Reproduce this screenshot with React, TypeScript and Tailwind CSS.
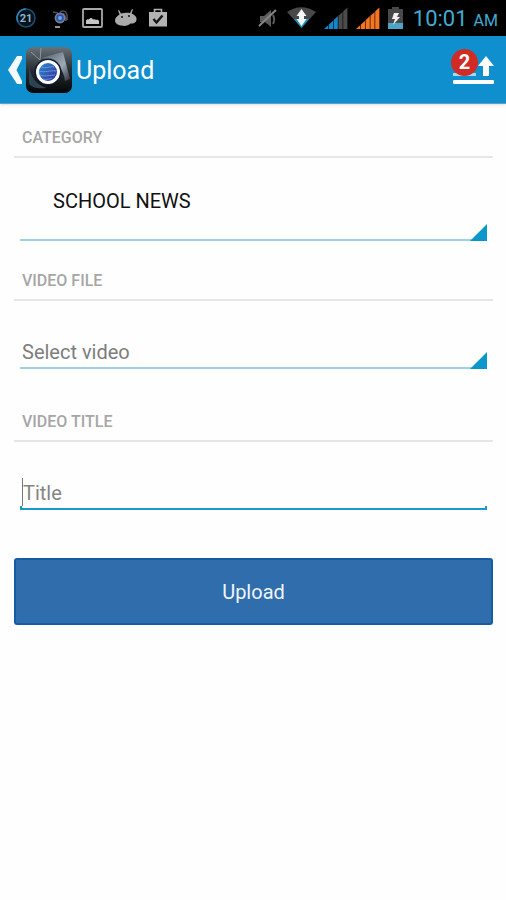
import { useState } from "react";
import type { ReactNode } from "react";

function SignalIcon({ active, inactive, level }: { active: string; inactive: string; level: number }) {
  const bars = [0, 1, 2, 3, 4];
  return (
    <svg width="24" height="22" viewBox="0 0 24 22" aria-hidden="true">
      {bars.map((i) => {
        const x = i * 4.8;
        const right = x + 4.2;
        return (
          <path
            key={i}
            d={`M${x} 22V${22 - x * 0.92}L${right} ${22 - right * 0.92}V22z`}
            fill={i < level ? active : inactive}
          />
        );
      })}
    </svg>
  );
}

function StatusBar() {
  return (
    <div className="flex items-center justify-between h-9 pl-4 pr-2 bg-black">
      {/* Notifications */}
      <div className="flex items-center">
        <svg width="20" height="20" viewBox="0 0 20 20" aria-hidden="true">
          <circle cx="10" cy="10" r="9" fill="#06131c" stroke="#1d4e70" strokeWidth="1.5" />
          <path d="M2 14a9 9 0 0 1 8-13" fill="none" stroke="#2f86bd" strokeWidth="1.5" />
          <text x="10" y="14" textAnchor="middle" fontSize="11" fontWeight="700" fill="#8fb4c8">
            21
          </text>
        </svg>
        <svg className="ml-4" width="18" height="22" viewBox="0 0 18 22" aria-hidden="true">
          <path d="M1 5l5 1M8 5c5-3 8 1 7 8M11 6c2 2 3 5 3 8" fill="none" stroke="#4b5058" strokeWidth="1.5" />
          <circle cx="8" cy="11" r="4.6" fill="#3150a8" stroke="#7d7f99" strokeWidth="1.6" />
          <circle cx="8" cy="11" r="2" fill="#57aee8" />
          <path d="M3 20h5" stroke="#bbb" strokeWidth="1.6" />
        </svg>
        <svg className="ml-3" width="21" height="20" viewBox="0 0 21 20" aria-hidden="true">
          <rect x="1" y="1" width="19" height="18" rx="1" fill="none" stroke="#a9a9a9" strokeWidth="1.8" />
          <path d="M4 16v-3.500c1-1.500 2-1.500 3-1 1-2 3-2 4 0 1.500-.5 2.500 0 3 .5 1.500-.5 2.500 0 3 1v3z" fill="#c4c4c4" />
        </svg>
        <svg className="ml-3" width="22" height="20" viewBox="0 0 22 20" aria-hidden="true">
          <path
            d="M4 2l2 3.500c3-1 6-1 9-.5l2-4 1 .5-1.500 4C20 7 22 9 21.500 12c-.5 3-4 4-6 3.500-2 2-6 3-9 2C4 17.500 0 16 0 12.500 0 10 2 8 4.600 6.500L3 2.500z"
            fill="#ababab"
          />
          <circle cx="7" cy="9" r="1" fill="#111" />
          <circle cx="14" cy="8" r="1" fill="#111" />
        </svg>
        <svg className="ml-3" width="18" height="20" viewBox="0 0 18 20" aria-hidden="true">
          <path d="M0 4h18v14.500H0z" fill="#b3b3b3" />
          <path d="M5.500 5V1.500h7V5" fill="none" stroke="#b3b3b3" strokeWidth="1.6" />
          <path d="M4.500 11l3 3.500 6-7" fill="none" stroke="#161616" strokeWidth="2.4" />
        </svg>
      </div>

      {/* System state */}
      <div className="flex items-center">
        <svg width="19" height="20" viewBox="0 0 19 20" aria-hidden="true">
          <path d="M2 8h4l7-6v17l-6-5H2z" fill="#5c5c5c" />
          <path d="M15 7c1.500 3 1.500 6 0 9" fill="none" stroke="#5c5c5c" strokeWidth="2" />
          <path d="M1 18L18 2" stroke="#858585" strokeWidth="2" />
        </svg>
        <svg className="ml-2.5" width="29" height="22" viewBox="0 0 29 22" aria-hidden="true">
          <path d="M0 5C9-1.500 20-1.500 29 5L14.500 21z" fill="#484848" />
          <path d="M7 12h15l-7.500 9z" fill="#1496bd" />
          <path d="M14.500 2l5 7H17v3h2.500l-5 7-5-7H12V9H9.500z" fill="#f5f5f5" />
        </svg>
        <div className="ml-2">
          <SignalIcon active="#1686cc" inactive="#4b4b4b" level={3} />
        </div>
        <div className="ml-2">
          <SignalIcon active="#f37421" inactive="#4b4b4b" level={5} />
        </div>
        <svg className="ml-2" width="15" height="22" viewBox="0 0 15 22" aria-hidden="true">
          <path d="M0 2h4V0h7v2h4v20H0z" fill="#484848" />
          <path d="M0 16h15v6H0z" fill="#4ba5c4" />
          <path d="M6 6h5l-2 4h3l-7 8 2-6H4z" fill="#f2f2f2" />
        </svg>
        <p className="flex items-baseline gap-1.5 ml-2.5 pt-0.5 text-[22px] leading-8 text-[#42abd0]">
          10:01 <span className="text-base">AM</span>
        </p>
      </div>
    </div>
  );
}

function AppLogo() {
  return (
    <svg width="46" height="46" viewBox="0 0 46 46" aria-hidden="true">
      <defs>
        <linearGradient id="logo-case" x1="0" y1="0" x2="0" y2="1">
          <stop offset="0" stopColor="#687278" />
          <stop offset="0.5" stopColor="#252d33" />
          <stop offset="1" stopColor="#050708" />
        </linearGradient>
        <linearGradient id="logo-panel" x1="0" y1="0" x2="1" y2="1">
          <stop offset="0" stopColor="#4d5c68" />
          <stop offset="0.6" stopColor="#9eabb6" />
          <stop offset="1" stopColor="#2a3137" />
        </linearGradient>
        <linearGradient id="logo-globe" x1="0" y1="0" x2="1" y2="1">
          <stop offset="0" stopColor="#2994d1" />
          <stop offset="1" stopColor="#3a2398" />
        </linearGradient>
      </defs>
      <rect width="46" height="46" rx="7" fill="url(#logo-case)" />
      <path d="M15 11L37 5l7 27-5 2C38 22 30 13 15 11z" fill="url(#logo-panel)" />
      <path d="M3 18c2 14 8 20 18 23-10 1-17-1-18-5z" fill="#2e4352" />
      <path d="M5 5l9 8M15 1l-1 12" stroke="#8e999d" strokeWidth="1" />
      <circle cx="22" cy="25" r="13.5" fill="#101a2a" />
      <circle cx="22" cy="25" r="10.5" fill="url(#logo-globe)" stroke="#fff" strokeWidth="3" />
      <path
        d="M15 20c5 2 9-1 13 0M13 24c6 2 11-1 17 0M14 28c6 2 10 0 15 0M17 32c4 1 7 0 9-1"
        fill="none"
        stroke="#6795dc"
        strokeWidth="1"
      />
    </svg>
  );
}

function ActionBar() {
  return (
    <header className="flex items-center justify-between h-[68px] pl-2 pr-3 bg-[#108fcf] border-b border-[#5f9fc6] shadow-sm">
      <button type="button" aria-label="Back" className="flex items-center">
        <svg width="14" height="30" viewBox="0 0 14 30" aria-hidden="true">
          <path d="M9 1h5v3L8.500 15 14 26v3H9L0 15z" fill="#f2f9ff" />
        </svg>
        <span className="ml-1">
          <AppLogo />
        </span>
      </button>
      <h1 className="ml-1 mr-auto pt-0.5 text-[25px] leading-8 text-white">Upload</h1>
      <button type="button" aria-label="Uploads, 2 pending" className="relative">
        <svg width="41" height="30" viewBox="0 0 41 30" aria-hidden="true">
          <path d="M0 18h23v3H0z" fill="#a9d7f2" />
          <path d="M33 1l8 10h-5v10h-6V11h-5z" fill="#fff" />
          <rect y="25" width="41" height="4" rx="1" fill="#fff" />
        </svg>
        <span className="absolute -left-0.5 -top-1.5 flex items-center justify-center size-[27px] rounded-full bg-[#d02b25] text-xl font-bold text-white">
          2
        </span>
      </button>
    </header>
  );
}

function SectionLabel({ htmlFor, children }: { htmlFor: string; children: ReactNode }) {
  return (
    <label
      htmlFor={htmlFor}
      className="flex items-center h-10 pt-0.5 px-2 border-b-2 border-[#e6e6e6] text-base font-medium text-[#a6a6a6]"
    >
      {children}
    </label>
  );
}

function SpinnerCorner() {
  return (
    <svg
      className="absolute right-0 bottom-0 pointer-events-none"
      width="17"
      height="17"
      viewBox="0 0 17 17"
      aria-hidden="true"
    >
      <path d="M17 0v17H0z" fill="#0c97cb" />
    </svg>
  );
}

export default function App() {
  const [title, setTitle] = useState("");

  return (
    <div className="min-h-screen bg-[#fefefe] font-[Roboto,sans-serif]">
      <StatusBar />
      <ActionBar />

      <form className="pl-3.5 pr-[13px] pt-3.5" onSubmit={(e) => e.preventDefault()}>
        {/* Category */}
        <SectionLabel htmlFor="category">CATEGORY</SectionLabel>
        <div className="relative mx-1.5 mb-5">
          <select
            id="category"
            className="block appearance-none w-full h-[83px] pt-1 pl-[33px] pr-6 border-b-2 border-[#9bd3e5] text-xl text-[#111] outline-none"
          >
            <option>SCHOOL NEWS</option>
          </select>
          <SpinnerCorner />
        </div>

        {/* Video file */}
        <SectionLabel htmlFor="video">VIDEO FILE</SectionLabel>
        <div className="relative mx-1.5 mb-[33px] pt-9">
          <select
            id="video"
            className="block appearance-none w-full h-8 pl-0.5 pr-6 border-b-2 border-[#9bd3e5] text-xl text-[#7d7d7d] outline-none"
          >
            <option>Select video</option>
          </select>
          <SpinnerCorner />
        </div>

        {/* Video title */}
        <SectionLabel htmlFor="title">VIDEO TITLE</SectionLabel>
        <div className="mx-1.5 mb-12 pt-9">
          <div className="flex items-center pl-0.5">
            <span className="w-px h-7 bg-[#777]" />
            <input
              id="title"
              type="text"
              placeholder="Title"
              value={title}
              onChange={(e) => setTitle(e.target.value)}
              className="flex-1 min-w-0 h-7 pt-0.5 text-xl text-[#111] placeholder:text-[#858585] outline-none"
            />
          </div>
          <div className="h-1 border-x-2 border-b-2 border-[#1a9aca]" />
        </div>

        <button
          type="submit"
          className="w-full h-[67px] rounded-[3px] border-2 border-[#155da2] bg-[#306dac] text-xl text-[#eef5ff]"
        >
          Upload
        </button>
      </form>
    </div>
  );
}
